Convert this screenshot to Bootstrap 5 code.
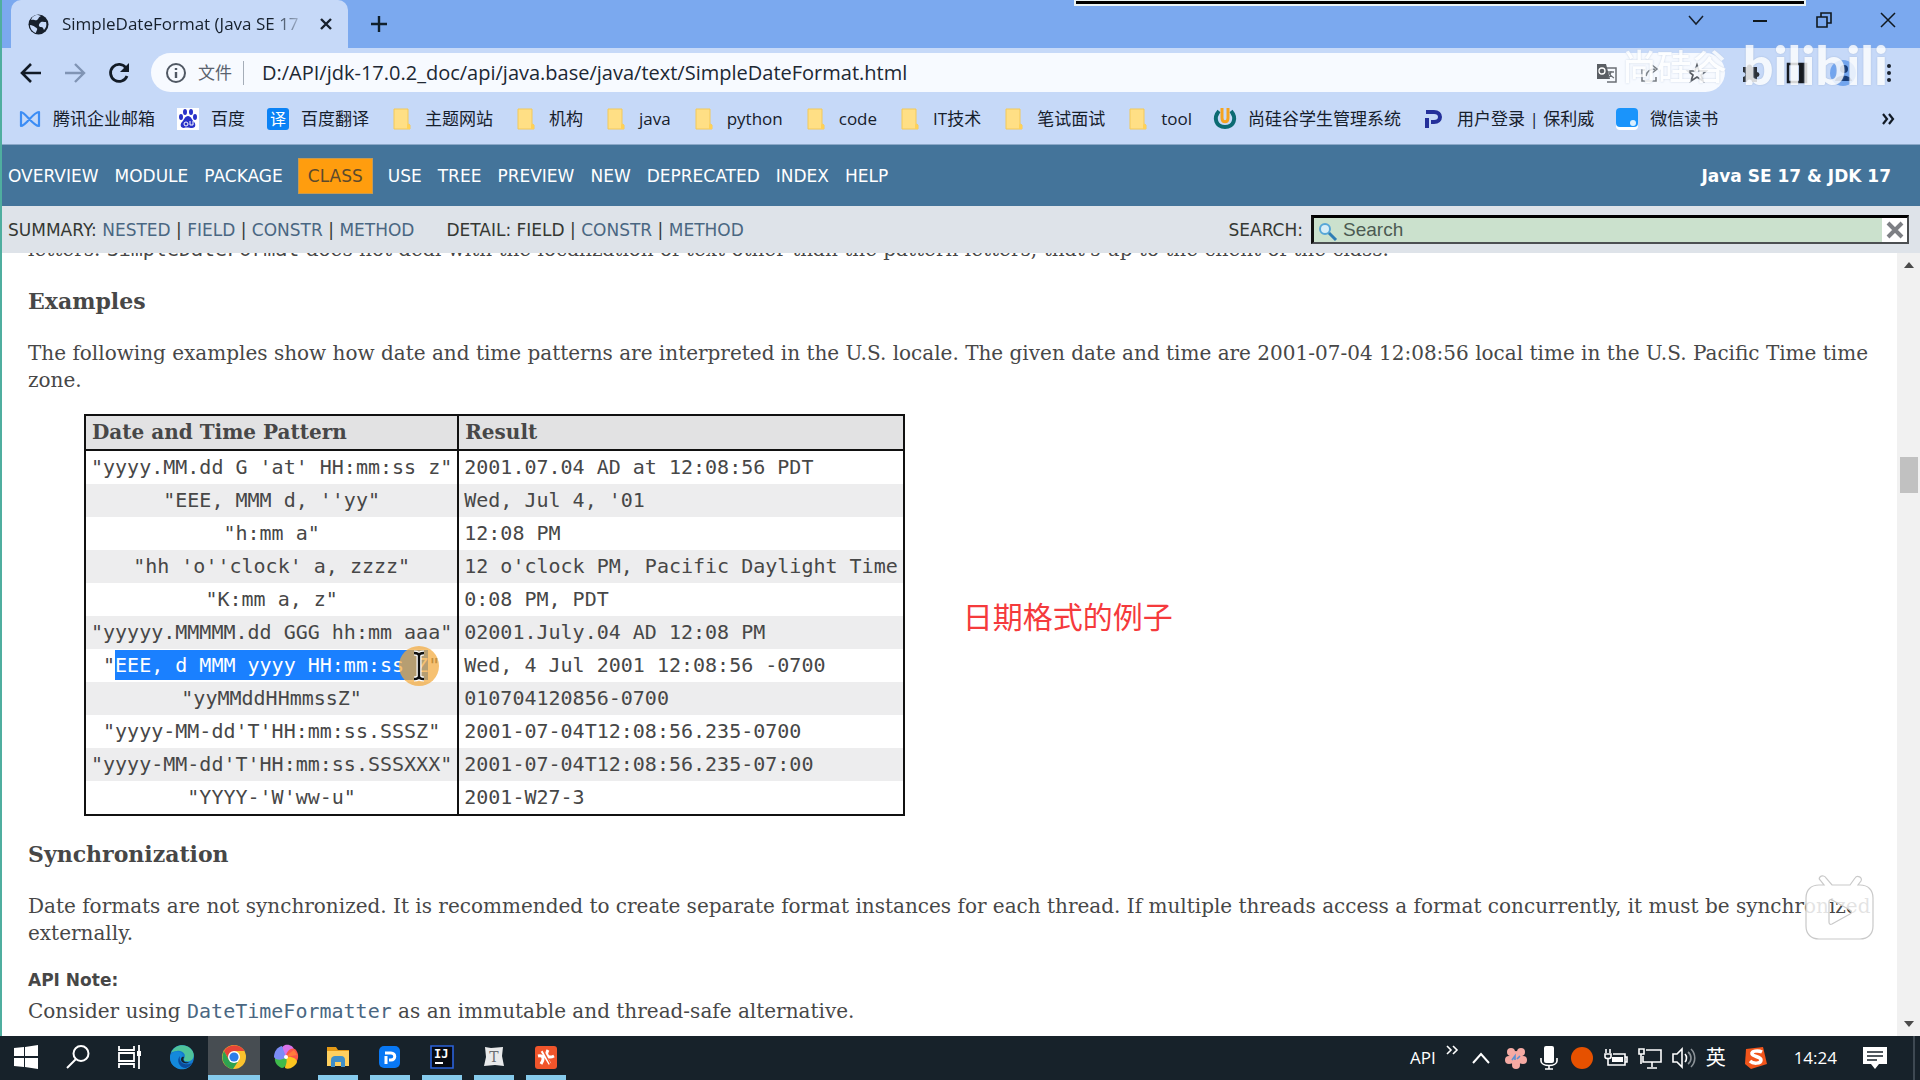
<!DOCTYPE html>
<html lang="en">
<head>
<meta charset="utf-8">
<meta name="viewport" content="width=device-width, initial-scale=1">
<title>SimpleDateFormat (Java SE 17 &amp; JDK 17)</title>
<link href="https://cdn.jsdelivr.net/npm/bootstrap@5.3.0/dist/css/bootstrap.min.css" rel="stylesheet">
<style>
  body { font-family: "Open Sans", "Noto Sans CJK SC", sans-serif; font-size: 17px; line-height: 24px; color: #16202c; background: #c6d9f8; }
  svg { display: block; flex: none; overflow: visible; }
  .ui-btn { background: none; border: 0; padding: 0; color: inherit; line-height: 1; display: flex; align-items: center; justify-content: center; }
  .desktop { min-height: 100vh; height: 100vh; overflow: hidden; }
  .browser { border-left: 2px solid #4fae9f; min-height: 0; }

  .tabstrip { background: #7ba9ef; height: 48px; padding-left: 9px; }
  .page-tab { background: #c6d9f8; border-radius: 10px 10px 0 0; width: 337px; height: 48px; padding: 0 12px 0 17px; gap: 13px; }
  .tab-title { overflow: hidden; white-space: nowrap; width: 244px; -webkit-mask-image: linear-gradient(90deg, #000 86%, transparent); mask-image: linear-gradient(90deg, #000 86%, transparent); }
  .new-tab { margin-left: 22px; }
  .win-controls { gap: 48px; padding-right: 24px; height: 40px; }
  .recorder-edge { position: absolute; top: 0; right: 114px; width: 732px; height: 6px; background: #000; border: 2px solid #eaf3f4; border-top-width: 1px; }

  .toolbar { height: 55px; padding: 0 20px 6px 18px; }
  .nav-btns { gap: 22px; width: 131px; }
  .omnibox { background: #f7faff; border-radius: 20px; height: 39px; padding: 0 17px 0 15px; gap: 12px; }
  .scheme { color: #5a626e; padding-right: 11px; border-right: 1px solid #a5adb8; line-height: 24px; }
  .address { border: 0; background: transparent; font-size: 20px; color: #202833; padding: 0 0 0 6px; min-width: 0; outline: 0; }
  .share-btn { margin: 0 14px 0 10px; }
  .ext-area { gap: 24px; padding-left: 15px; }
  .ext-area .ui-btn { width: 22px; }

  .bookmarks { height: 41px; padding: 0 25px 9px 17px; gap: 22px; white-space: nowrap; }
  .bookmarks a { color: #16202c; text-decoration: none; gap: 12px; }

  .doc { font-family: "DejaVu Serif", serif; font-size: 20px; line-height: 27px; color: #474747; background: #fff; min-height: 0; }
  .top-nav { background: #44749a; color: #fff; height: 62px; padding: 0 29px 0 6px; font: 17px/24px "DejaVu Sans", sans-serif; border-top: 1px solid #8ba8c9; }
  .top-nav a { color: #fff; text-decoration: none; }
  .top-links { gap: 16px; }
  .top-links .current { color: #5c4a2c; padding: 5px 9px; margin: 0 -1px; border: 1px solid #c59a52; background: #ff9d0e; }
  .sub-nav { background: #dee3e9; color: #353833; height: 47px; padding: 0 11px 0 6px; font: 17px/24px "DejaVu Sans", sans-serif; }
  .sub-nav a { color: #4a6782; text-decoration: none; }
  .search-wrap { width: 598px; height: 29px; background: #cbe1cd; border: 2px solid #4c4f52; border-top: 3px solid #000; border-left: 3px solid #111; }
  .search-wrap input { border: 0; outline: 0; background: transparent; font: 19px/22px "Liberation Sans", sans-serif; color: #4b5a52; padding: 0 0 0 5px; min-width: 0; }
  .search-wrap input::placeholder { color: #4b5a52; opacity: 1; }
  .search-clear { width: 25px; background: #fff; }

  .doc-body { overflow: hidden; padding: 0 12px 0 26px; min-width: 0; }
  .doc-body p { margin: 0; }
  .doc-body code, .doc-body a { font-family: "DejaVu Sans Mono", monospace; font-size: 20px; color: inherit; }
  .doc-body a { color: #4a6782; text-decoration: none; }
  .doc-body h3 { font-size: 22px; line-height: 30px; font-weight: 700; margin: 23px 0 24px; }
  .scrolled-off { margin-top: -17px !important; }
  .example-row { margin: 20px 0 0 56px; gap: 58px; }
  .patterns { width: auto; border: 2px solid #111; border-collapse: collapse; font-size: 20px; line-height: 27px; }
  .patterns thead th { background: #e2e2e3; padding: 3px 6px; border-bottom: 2px solid #111; text-align: left; font-weight: 700; }
  .patterns tbody th, .patterns td { font-family: "DejaVu Sans Mono", monospace; font-weight: 400; padding: 3px 5px; white-space: nowrap; }
  .patterns tbody th { text-align: center; }
  .patterns th:first-child { border-right: 2px solid #111; }
  .patterns tbody tr:nth-child(even) { background: #ededee; }
  .picked { background: #1a80ff; color: #fff; padding: 3px 0; }
  .pointer-spot { position: absolute; right: 18px; top: -4px; }
  .subtitle { font: 30px/40px "Noto Sans CJK SC", sans-serif; color: #f53a3c; }
  .note-label { font: bold 17px/27px "DejaVu Sans", sans-serif; }

  .scroller { width: 24px; background: #f1f1f1; padding: 8px 0; }
  .thumb { width: 18px; height: 36px; background: #c1c1c1; margin-top: 189px; }

  .mark-row { position: absolute; top: 33px; right: 32px; color: #fff; opacity: .82; pointer-events: none; gap: 16px; }
  .mark-cn { font: 500 35px/64px "Noto Sans CJK SC", sans-serif; text-shadow: 0 0 2px #b9c8de; }
  .mark-bili { font: 900 54px/64px Lato, sans-serif; text-shadow: 0 0 2px #9db2d0; }
  .mark-tv { position: absolute; right: 44px; bottom: 137px; pointer-events: none; }

  .taskbar { background: #17222a; height: 44px; color: #fff; }
  .task { width: 52px; height: 44px; position: relative; padding-bottom: 2px; }
  .task.open::after { content: ""; position: absolute; left: 6px; right: 6px; bottom: 0; height: 5px; background: #86cbec; }
  .task.active { background: #474d52; }
  .task.active::after { left: 0; right: 0; }
  .tray { gap: 10px; padding-right: 5px; }
  .tray > * { flex: none; }
</style>
<script src="https://cdn.jsdelivr.net/npm/bootstrap@5.3.0/dist/js/bootstrap.bundle.min.js"></script>
</head>
<body>
<svg width="0" height="0" class="position-absolute">
  <symbol id="folder" viewBox="0 0 22 22"><path d="M3 1h14v15l2 1v4H3z" fill="#ffdf85" stroke="#f3c95a"/><path d="M16 16v5h3v-4z" fill="#ffd157"/></symbol>
</svg>
<div class="desktop d-flex flex-column position-relative">
<div class="browser d-flex flex-column flex-grow-1">

  <header>
    <div class="tabstrip d-flex align-items-end">
      <div class="page-tab d-flex align-items-center">
        <svg width="21" height="21" viewBox="0 0 21 21"><circle cx="10.500" cy="10.500" r="10" fill="#17202c"/><path d="M3 6c3-1 4 1 6 0s1-3 4-4l-3-1C6 1 4 3 3 6zM2 11c2 0 4 1 5 2s3 1 2 3-1 2-1 3c-3-1-6-4-6-8zM12 9c1-2 4-1 6-1 1 3 0 6-2 8-1-2-1-3-3-3s-3-2-1-4z" fill="#c6d9f8"/></svg>
        <span class="tab-title">SimpleDateFormat (Java SE 17</span>
        <button class="ui-btn" aria-label="Close tab"><svg width="14" height="14" viewBox="0 0 14 14" stroke="#17202c" stroke-width="2.400"><path d="M2 2l10 10M12 2L2 12"/></svg></button>
      </div>
      <button class="ui-btn new-tab h-100" aria-label="New tab"><svg width="18" height="18" viewBox="0 0 18 18" stroke="#10202c" stroke-width="2.400"><path d="M9 1v16M1 9h16"/></svg></button>
      <div class="win-controls d-flex align-items-center ms-auto align-self-start">
        <button class="ui-btn" aria-label="Search tabs"><svg width="16" height="16" viewBox="0 0 16 16" fill="none" stroke="#17202c" stroke-width="1.500"><path d="M1 4l7 8 7-8"/></svg></button>
        <button class="ui-btn" aria-label="Minimize"><svg width="16" height="16" viewBox="0 0 16 16" stroke="#10181f" stroke-width="2"><path d="M1 9h14"/></svg></button>
        <button class="ui-btn" aria-label="Restore"><svg width="16" height="16" viewBox="0 0 16 16" fill="none" stroke="#10181f" stroke-width="1.600"><path d="M1 5h10v10H1zM5 5V1h10v10h-4"/></svg></button>
        <button class="ui-btn" aria-label="Close"><svg width="16" height="16" viewBox="0 0 16 16" stroke="#10181f" stroke-width="1.500"><path d="M1 1l14 14M15 1L1 15"/></svg></button>
      </div>
    </div>

    <div class="toolbar d-flex align-items-center">
      <div class="nav-btns d-flex align-items-center">
        <button class="ui-btn" aria-label="Back"><svg width="22" height="22" viewBox="0 0 22 22" fill="none" stroke="#121b26" stroke-width="2.600"><path d="M11 2l-9 9 9 9M2 11h19"/></svg></button>
        <button class="ui-btn" aria-label="Forward"><svg width="22" height="22" viewBox="0 0 22 22" fill="none" stroke="#8094b4" stroke-width="2.400"><path d="M11 2l9 9-9 9M20 11H1"/></svg></button>
        <button class="ui-btn" aria-label="Reload"><svg width="24" height="22" viewBox="0 0 24 22"><path d="M19 14a8.500 8.500 0 1 1-1-8" fill="none" stroke="#121b26" stroke-width="2.800"/><path d="M21 1v9h-9z" fill="#121b26"/></svg></button>
      </div>
      <div class="omnibox d-flex align-items-center flex-grow-1">
        <svg width="20" height="20" viewBox="0 0 20 20" fill="none" stroke="#505863" stroke-width="2"><circle cx="10" cy="10" r="9"/><path d="M10 9v6M10 5v2" stroke-width="2.400"/></svg>
        <label class="scheme" for="url">文件</label>
        <input id="url" class="address flex-grow-1" type="text" value="D:/API/jdk-17.0.2_doc/api/java.base/java/text/SimpleDateFormat.html">
        <button class="ui-btn" aria-label="Translate"><svg width="22" height="20" viewBox="0 0 22 20"><path d="M8 5h12v14h-9" fill="#f7faff" stroke="#6b6f75" stroke-width="1.500"/><path d="M1 1h9l4 15H1z" fill="#5a5e64"/><circle cx="6" cy="8" r="3" fill="none" stroke="#fff" stroke-width="1.300"/><path d="M12 9h6M15 8c0 4-1 5-3 7M13 10c1 3 3 4 5 5" stroke="#6b6f75" stroke-width="1.300" fill="none"/></svg></button>
        <button class="ui-btn share-btn" aria-label="Share"><svg width="20" height="20" viewBox="0 0 20 20" fill="none" stroke="#777c82" stroke-width="1.600"><path d="M5 7H2v11h14v-4M6 13c1-5 4-7 9-7M12 2l5 4-5 4"/></svg></button>
        <button class="ui-btn" aria-label="Bookmark this page"><svg width="22" height="20" viewBox="0 0 22 20" fill="none" stroke="#565b62" stroke-width="1.700"><path d="M11 2l2 6h7l-5 4 2 6-6-4-6 4 2-6-5-4h7z"/></svg></button>
      </div>
      <div class="ext-area d-flex align-items-center">
        <button class="ui-btn" aria-label="Extensions"><svg width="20" height="20" viewBox="0 0 20 20" fill="#2b3037"><path d="M2 4h4a2.500 2.500 0 0 1 5 0h5v5a2.500 2.500 0 0 1 0 5v5h-5a2.500 2.500 0 0 0-5 0H2v-5a2.500 2.500 0 0 0 0-5z"/></svg></button>
        <button class="ui-btn" aria-label="Side panel"><svg width="20" height="20" viewBox="0 0 20 20"><path d="M1 1h18v18H1z" fill="none" stroke="#15191f" stroke-width="2.500"/><path d="M12 1h7v18h-7z" fill="#15191f"/></svg></button>
        <button class="ui-btn" aria-label="Profile"><svg width="28" height="28" viewBox="0 0 28 28"><circle cx="14" cy="14" r="13" fill="#72a5ee"/><circle cx="15" cy="10" r="4" fill="#153a75"/><path d="M6 22c1-7 16-7 17 0z" fill="#153a75"/></svg></button>
        <button class="ui-btn" aria-label="Menu"><svg width="6" height="20" viewBox="0 0 6 20" fill="#1a222d"><circle cx="3" cy="3" r="2"/><circle cx="3" cy="10" r="2"/><circle cx="3" cy="17" r="2"/></svg></button>
      </div>
    </div>

    <nav class="bookmarks d-flex align-items-center" aria-label="Bookmarks">
      <a class="d-flex align-items-center" href="#"><svg width="22" height="22" viewBox="0 0 22 22" fill="none" stroke="#3c8df5" stroke-width="2.200"><path d="M2 4c4 0 12 14 18 14V4C14 4 7 18 2 18z" stroke-linejoin="round"/></svg>腾讯企业邮箱</a>
      <a class="d-flex align-items-center" href="#"><svg width="22" height="22" viewBox="0 0 22 22"><path d="M0 0h22v22H0z" fill="#fff"/><g fill="#2932c9"><ellipse cx="4" cy="9" rx="2" ry="3"/><ellipse cx="8" cy="4" rx="2" ry="3"/><ellipse cx="14" cy="4" rx="2" ry="3"/><ellipse cx="18" cy="9" rx="2" ry="3"/><path d="M11 8c3 0 4 4 6 6s2 6-2 6c-2 0-6-1-8 0-4 0-4-4-2-6s3-6 6-6z"/></g><circle cx="9" cy="16" r="2" fill="none" stroke="#fff"/><path d="M13 13v4h3v-4" fill="none" stroke="#fff"/></svg>百度</a>
      <a class="d-flex align-items-center" href="#"><svg width="22" height="22" viewBox="0 0 22 22"><rect width="22" height="22" rx="3" fill="#0b82f5"/><text x="11" y="17" text-anchor="middle" font-family="Noto Sans CJK SC" font-size="16" fill="#fff">译</text></svg>百度翻译</a>
      <a class="d-flex align-items-center" href="#"><svg width="22" height="22"><use href="#folder"/></svg>主题网站</a>
      <a class="d-flex align-items-center" href="#"><svg width="22" height="22"><use href="#folder"/></svg>机构</a>
      <a class="d-flex align-items-center" href="#"><svg width="22" height="22"><use href="#folder"/></svg>java</a>
      <a class="d-flex align-items-center" href="#"><svg width="22" height="22"><use href="#folder"/></svg>python</a>
      <a class="d-flex align-items-center" href="#"><svg width="22" height="22"><use href="#folder"/></svg>code</a>
      <a class="d-flex align-items-center" href="#"><svg width="22" height="22"><use href="#folder"/></svg>IT技术</a>
      <a class="d-flex align-items-center" href="#"><svg width="22" height="22"><use href="#folder"/></svg>笔试面试</a>
      <a class="d-flex align-items-center" href="#"><svg width="22" height="22"><use href="#folder"/></svg>tool</a>
      <a class="d-flex align-items-center" href="#"><svg width="22" height="22" viewBox="0 0 22 22" fill="none"><path d="M5 3c-6 7-3 16 6 16s12-9 6-16" stroke="#0c6b72" stroke-width="4"/><path d="M8 0v10c0 5 6 5 6 0V0" stroke="#f5a31f" stroke-width="3"/></svg>尚硅谷学生管理系统</a>
      <a class="d-flex align-items-center" href="#"><svg width="22" height="22" viewBox="0 0 22 22" fill="none" stroke="#24309a" stroke-width="4"><path d="M4 10v10M3 4h8c8 0 8 10 0 10H8"/></svg>用户登录 | 保利威</a>
      <a class="d-flex align-items-center" href="#"><svg width="22" height="22" viewBox="0 0 22 22"><rect y="2" width="22" height="20" rx="4" fill="#fff"/><rect width="22" height="19" rx="4" fill="#1a94fb"/><circle cx="17" cy="15" r="3" fill="#d9efff"/></svg>微信读书</a>
      <button class="ui-btn ms-auto" aria-label="More bookmarks"><svg width="14" height="12" viewBox="0 0 14 12" fill="none" stroke="#121b26" stroke-width="2.200"><path d="M2 1l4 5-4 5M8 1l4 5-4 5"/></svg></button>
    </nav>
  </header>

  <section class="doc d-flex flex-column flex-grow-1">
    <nav class="top-nav d-flex align-items-center justify-content-between">
      <div class="top-links d-flex align-items-center">
        <a href="#">OVERVIEW</a><a href="#">MODULE</a><a href="#">PACKAGE</a><span class="current">CLASS</span><a href="#">USE</a><a href="#">TREE</a><a href="#">PREVIEW</a><a href="#">NEW</a><a href="#">DEPRECATED</a><a href="#">INDEX</a><a href="#">HELP</a>
      </div>
      <strong>Java SE 17 &amp; JDK 17</strong>
    </nav>
    <div class="sub-nav d-flex align-items-center">
      <div>SUMMARY: <a href="#">NESTED</a> | <a href="#">FIELD</a> | <a href="#">CONSTR</a> | <a href="#">METHOD</a></div>
      <div class="ms-4 ps-2">DETAIL: FIELD | <a href="#">CONSTR</a> | <a href="#">METHOD</a></div>
      <label class="ms-auto me-2" for="search">SEARCH:</label>
      <div class="search-wrap d-flex align-items-stretch">
        <svg class="ms-1 mt-1" width="20" height="20" viewBox="0 0 20 20" fill="none"><circle cx="7" cy="7" r="5" stroke="#56a6d8" stroke-width="2" fill="#d7edf7"/><path d="M11 11l7 7" stroke="#2f7db5" stroke-width="3"/></svg>
        <input id="search" class="flex-grow-1" type="text" placeholder="Search">
        <button class="ui-btn search-clear" aria-label="Clear"><svg width="18" height="18" viewBox="0 0 18 18" stroke="#7d7f84" stroke-width="4"><path d="M2 2l14 14M16 2L2 16"/></svg></button>
      </div>
    </div>

    <div class="d-flex flex-grow-1 overflow-hidden">
      <main class="doc-body flex-grow-1">
        <p class="scrolled-off">letters. <code>SimpleDateFormat</code> does not deal with the localization of text other than the pattern letters; that's up to the client of the class.</p>
        <h3>Examples</h3>
        <p>The following examples show how date and time patterns are interpreted in the U.S. locale. The given date and time are 2001-07-04 12:08:56 local time in the U.S. Pacific Time time zone.</p>
        <div class="example-row d-flex align-items-center">
          <table class="patterns">
            <thead><tr><th scope="col">Date and Time Pattern</th><th scope="col">Result</th></tr></thead>
            <tbody>
              <tr><th scope="row">"yyyy.MM.dd G 'at' HH:mm:ss z"</th><td>2001.07.04 AD at 12:08:56 PDT</td></tr>
              <tr><th scope="row">"EEE, MMM d, ''yy"</th><td>Wed, Jul 4, '01</td></tr>
              <tr><th scope="row">"h:mm a"</th><td>12:08 PM</td></tr>
              <tr><th scope="row">"hh 'o''clock' a, zzzz"</th><td>12 o'clock PM, Pacific Daylight Time</td></tr>
              <tr><th scope="row">"K:mm a, z"</th><td>0:08 PM, PDT</td></tr>
              <tr><th scope="row">"yyyyy.MMMMM.dd GGG hh:mm aaa"</th><td>02001.July.04 AD 12:08 PM</td></tr>
              <tr><th scope="row" class="position-relative">"<span class="picked">EEE, d MMM yyyy HH:mm:ss Z</span>"<svg class="pointer-spot" width="40" height="42" viewBox="0 0 40 42"><circle cx="20" cy="21" r="20" fill="#f2a93b" fill-opacity=".72"/><path d="M15 8c3 0 5 1 5 3 0-2 2-3 5-3M20 11v20M15 34c3 0 5-1 5-3 0 2 2 3 5 3" fill="none" stroke="#fff" stroke-width="5"/><path d="M15 8c3 0 5 1 5 3 0-2 2-3 5-3M20 11v20M15 34c3 0 5-1 5-3 0 2 2 3 5 3" fill="none" stroke="#111" stroke-width="2.400"/></svg></th><td>Wed, 4 Jul 2001 12:08:56 -0700</td></tr>
              <tr><th scope="row">"yyMMddHHmmssZ"</th><td>010704120856-0700</td></tr>
              <tr><th scope="row">"yyyy-MM-dd'T'HH:mm:ss.SSSZ"</th><td>2001-07-04T12:08:56.235-0700</td></tr>
              <tr><th scope="row">"yyyy-MM-dd'T'HH:mm:ss.SSSXXX"</th><td>2001-07-04T12:08:56.235-07:00</td></tr>
              <tr><th scope="row">"YYYY-'W'ww-u"</th><td>2001-W27-3</td></tr>
            </tbody>
          </table>
          <div class="subtitle" lang="zh">日期格式的例子</div>
        </div>
        <h3>Synchronization</h3>
        <p>Date formats are not synchronized. It is recommended to create separate format instances for each thread. If multiple threads access a format concurrently, it must be synchronized externally.</p>
        <div class="note-label mt-3 pt-1">API Note:</div>
        <p class="mt-1">Consider using <a href="#">DateTimeFormatter</a> as an immutable and thread-safe alternative.</p>
      </main>
      <div class="scroller d-flex flex-column align-items-center" aria-hidden="true">
        <svg width="10" height="7" viewBox="0 0 10 7"><path d="M0 7l5-6 5 6z" fill="#4b4b4b"/></svg>
        <div class="thumb"></div>
        <svg class="mt-auto" width="10" height="7" viewBox="0 0 10 7"><path d="M0 0h10L5 6z" fill="#4b4b4b"/></svg>
      </div>
    </div>
  </section>
</div>

<footer class="taskbar d-flex align-items-center justify-content-between">
  <div class="d-flex">
    <button class="ui-btn task" aria-label="Start"><svg width="24" height="24" viewBox="0 0 24 24" fill="#fff"><path d="M0 3l10-1v9H0zM11 2l13-2v11H11zM0 13h10v9L0 21zM11 13h13v11l-13-2z"/></svg></button>
    <button class="ui-btn task" aria-label="Search"><svg width="24" height="24" viewBox="0 0 24 24" fill="none" stroke="#fff" stroke-width="2"><circle cx="15" cy="8.500" r="7.500"/><path d="M10 14l-9 9"/></svg></button>
    <button class="ui-btn task" aria-label="Task view"><svg width="24" height="24" viewBox="0 0 24 24" fill="none" stroke="#fff" stroke-width="1.800"><path d="M1 1v4h15V1M1 8h15v8H1zM1 23v-4h15v4M21 0v24"/><path d="M19 6h4v5h-4z" fill="#fff" stroke="none"/></svg></button>
    <button class="ui-btn task" aria-label="Edge"><svg width="24" height="24" viewBox="0 0 24 24"><circle cx="12" cy="12" r="12" fill="#1479cf"/><path d="M1 8C4 0 14-2 20 3c5 4 5 11 0 13-3 1-7 0-6-2 3-5-2-9-7-8-3 0-5 1-6 2z" fill="#4fc39a"/><path d="M0 12c2-7 12-7 13-1-4 2-3 8 2 10 3 1 6-1 7-3-3 7-12 8-17 4-3-2-5-5-5-10z" fill="#1489db"/><path d="M10 11c-4 4-1 12 6 12 3-1 5-3 6-5-5 3-14 1-12-7z" fill="#0b4c9c"/><path d="M14 12c-2 4 1 6 5 5-1 2-7 2-8-2 0-2 1-4 3-3z" fill="#17222a"/></svg></button>
    <button class="ui-btn task open active" aria-label="Chrome"><svg width="24" height="24" viewBox="0 0 24 24"><circle cx="12" cy="12" r="12" fill="#fbc22d"/><path d="M2 6a12 12 0 0 1 20.500 0H12L7 15z" fill="#e64537"/><path d="M2 6a12 12 0 0 0 9 18l6-9H7z" fill="#2ea250"/><circle cx="12" cy="12" r="6" fill="#fff"/><circle cx="12" cy="12" r="4.600" fill="#2b7de9"/></svg></button>
    <button class="ui-btn task" aria-label="Photos"><svg width="24" height="24" viewBox="0 0 24 24"><path d="M12 12C6 10 5 3 11 0c5-1 9 2 9 5z" fill="#d873e8"/><path d="M12 12c0-6 5-10 9-8 4 4 4 10 1 13z" fill="#fb5548"/><path d="M12 12c6-1 11 2 11 5-2 5-8 8-12 6z" fill="#fbc51f"/><path d="M12 12c2 6-1 11-4 11-4-1-8-6-7-10z" fill="#3fbb4b"/><path d="M12 12C8 16 1 15 0 12 0 7 3 2 8 1z" fill="#7b8cf6"/><path d="M12 12c3-4 8-7 8-7l3 5z" fill="#ff7a3c"/><circle cx="12" cy="12" r="2" fill="#fff"/></svg></button>
    <button class="ui-btn task open" aria-label="File Explorer"><svg width="24" height="24" viewBox="0 0 24 24"><path d="M1 2h9l2 3h11v15H1z" fill="#e59a16"/><path d="M1 6h22v15H1z" fill="#ffd05f"/><path d="M5 22v-7c0-3 2-4 4-4h6c3 0 4 2 4 4v7h-4v-5H9v5z" fill="#3f8fc9"/></svg></button>
    <button class="ui-btn task open" aria-label="Polyv"><svg width="22" height="24" viewBox="0 0 22 24"><rect y="1" width="21" height="22" rx="5" fill="#0878f4"/><path d="M7 11v8M6 8h6c5 0 5 7 0 7h-2" fill="none" stroke="#fff" stroke-width="3"/></svg></button>
    <button class="ui-btn task open" aria-label="IntelliJ IDEA"><svg width="24" height="24" viewBox="0 0 24 24"><path d="M1 1h22v22H1z" fill="#070a12" stroke="#2b62d9" stroke-width="1.600"/><text x="4" y="13" font-family="DejaVu Sans Mono" font-weight="700" font-size="12" fill="#fff">IJ</text><path d="M5 18h8" stroke="#fff" stroke-width="2"/></svg></button>
    <button class="ui-btn task open" aria-label="Typora"><svg width="22" height="24" viewBox="0 0 22 24"><path d="M2 2l6 1 12-1-1 9 2 10-9-1-11 1 2-9z" fill="#e9eaeb"/><text x="11" y="17" text-anchor="middle" font-family="DejaVu Serif" font-size="14" fill="#6b6e72">T</text></svg></button>
    <button class="ui-btn task open" aria-label="Xmind"><svg width="24" height="24" viewBox="0 0 24 24"><rect x="1" y="1" width="22" height="23" rx="3" fill="#f0552b"/><path d="M4 11c4-1 5 1 5 3s-1 3-2 5M20 11c-4 2-6 1-7-1s0-3 1-5M8 6l8 13" stroke="#fff" stroke-width="3" fill="none"/><path d="M9 5l8 15" stroke="#f0552b" stroke-width="1.500"/></svg></button>
  </div>
  <div class="tray d-flex align-items-center">
    <span>API</span>
    <svg class="mb-3" width="12" height="8" viewBox="0 0 12 8" fill="none" stroke="#fff" stroke-width="1.600"><path d="M1 0l4 4-4 4M7 0l4 4-4 4"/></svg>
    <svg class="mx-1" width="18" height="12" viewBox="0 0 18 12" fill="none" stroke="#fff" stroke-width="2"><path d="M1 11l8-9 8 9"/></svg>
    <svg width="24" height="22" viewBox="-1 0 24 22"><g fill="#f5aaa3"><circle cx="11" cy="11" r="7"/><circle cx="6" cy="5" r="4"/><circle cx="16" cy="5" r="4"/><circle cx="4" cy="13" r="4"/><circle cx="18" cy="13" r="4"/><circle cx="11" cy="18" r="4"/></g><path d="M7 13l3-4v4M12 12l3-3" stroke="#5b8fd0" stroke-width="1.600" fill="none"/></svg>
    <svg width="22" height="24" viewBox="-2 0 22 24"><rect x="4" y="0" width="10" height="17" rx="2" fill="#fff"/><path d="M1 12v3c0 6 16 6 16 0v-3M9 19v4M5 23h8" fill="none" stroke="#fff" stroke-width="1.600"/></svg>
    <svg width="24" height="24" viewBox="0 0 24 24"><circle cx="12" cy="12" r="11" fill="#e65100"/></svg>
    <svg width="24" height="20" viewBox="0 0 24 20" fill="none" stroke="#fff" stroke-width="1.600"><path d="M2 1v4M6 1v4M1 6h6v3c0 2-6 2-6 0zM4 10v7h17V6H9"/><path d="M21 9h2v5h-2" /><path d="M8 9h11v5H8z" fill="#fff" stroke="none"/></svg>
    <svg width="24" height="22" viewBox="0 0 24 22" fill="none" stroke="#fff" stroke-width="1.600"><path d="M8 3h15v12H5v-6M14 15v5M9 21h10M1 2h5v5H1zM3 7v10"/></svg>
    <svg width="24" height="22" viewBox="0 0 24 22" fill="none" stroke="#fff" stroke-width="1.600"><path d="M1 7h4l5-5v18l-5-5H1zM13 7c2 2 2 6 0 8"/><path d="M16 5c4 3 4 9 0 12M19 2c5 5 5 13 0 18" stroke="#8b9297"/></svg>
    <span class="fs-5">英</span>
    <svg class="mx-2" width="24" height="24" viewBox="0 0 24 24"><path d="M2 3l17-2 4 17-16 5-6-5z" fill="#f1551b"/><path d="M18 6c-4-2-11-1-10 2s9 2 9 6-8 4-11 1" stroke="#fff" stroke-width="3.500" fill="none"/></svg>
    <time class="mx-2">14:24</time>
    <svg class="ms-2" width="24" height="24" viewBox="0 0 24 24"><path d="M0 1h24v17h-8l-4 5-4-5H0z" fill="#fff"/><path d="M4 6h16M4 10h16M4 14h10" stroke="#17222a" stroke-width="1.600"/></svg>
    <svg class="ms-3" width="2" height="44"><path d="M1 0v44" stroke="#67707a"/></svg>
  </div>
</footer>

<div class="recorder-edge"></div>
<div class="mark-row d-flex align-items-center"><span class="mark-cn" lang="zh">尚硅谷</span><span class="mark-bili">bilibili</span></div>
<svg class="mark-tv" width="72" height="68" viewBox="0 0 72 68"><path fill="#fff" fill-opacity=".85" stroke="#c9c9c9" stroke-width="1.200" fill-rule="evenodd" d="M16 2c2-2 5-1 6 1l6 7h18l5-7c2-3 8-1 6 3l-3 4h2c8 0 13 5 13 13v28c0 8-5 13-13 13H15C7 64 2 59 2 51V23c0-8 5-13 13-13h5l-4-5c-1-1-1-2 0-3zM28 25c-2-1-3 0-3 2v20c0 2 1 3 3 2l18-10c2-1 2-3 0-4z"/></svg>
</div>
</body>
</html>
